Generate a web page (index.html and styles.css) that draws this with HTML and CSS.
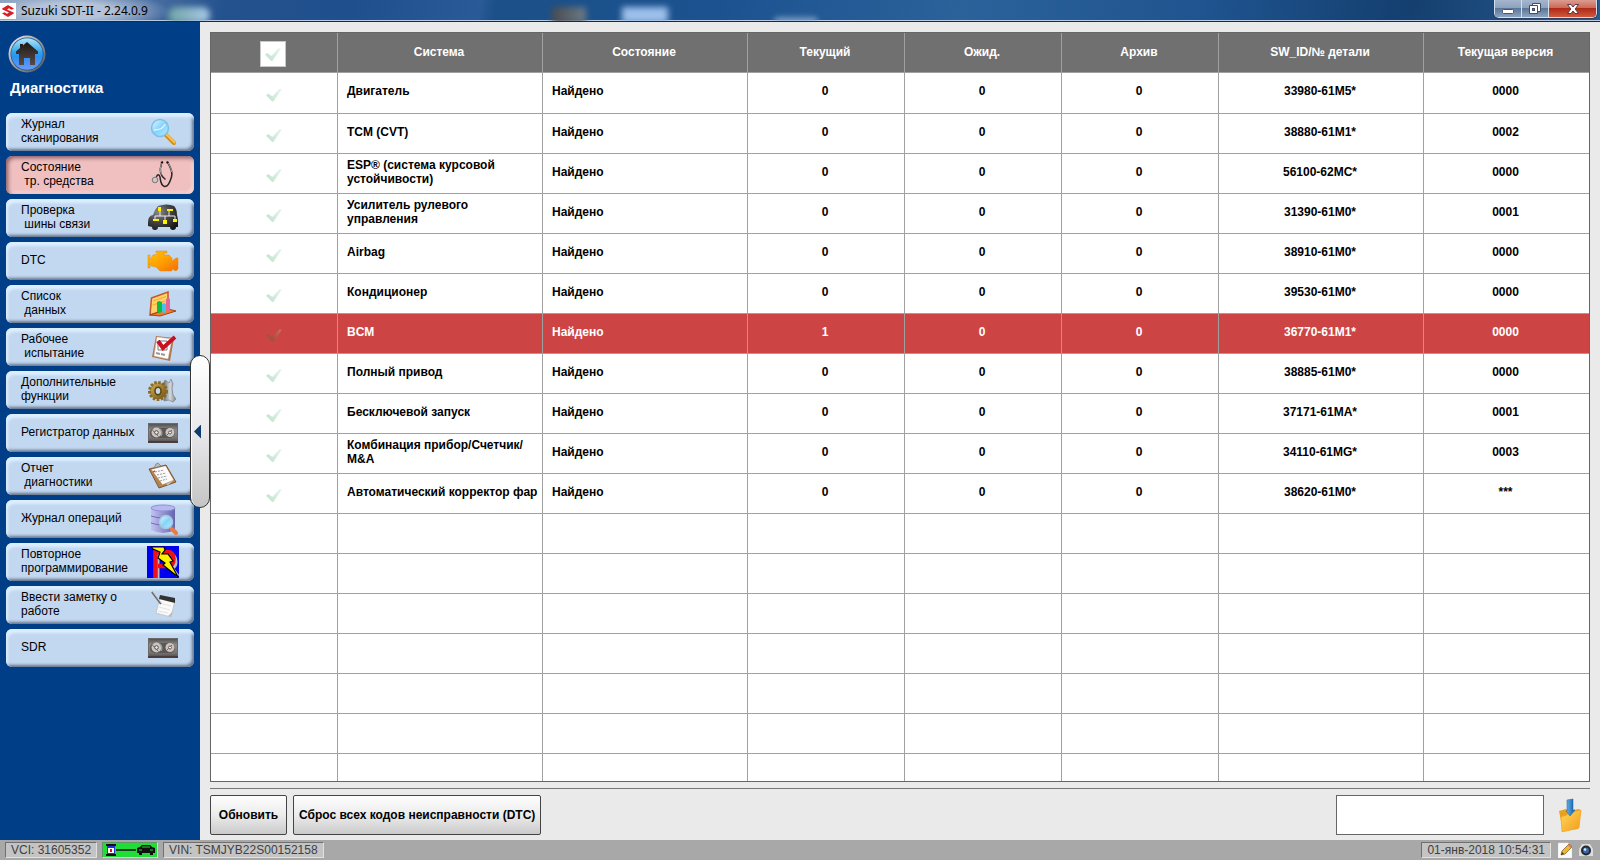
FILE: index.html
```
<!DOCTYPE html>
<html lang="ru">
<head>
<meta charset="utf-8">
<title>Suzuki SDT-II - 2.24.0.9</title>
<link rel="stylesheet" href="styles.css">
</head>
<body>
<svg class="defs" aria-hidden="true">
  <defs>
    <linearGradient id="lens" x1="0" y1="0" x2="1" y2="1"><stop offset="0" stop-color="#e4f9ff"/><stop offset=".5" stop-color="#86d3fa"/><stop offset="1" stop-color="#b8ecff"/></linearGradient>
    <radialGradient id="car" cx=".35" cy=".3" r=".8"><stop offset="0" stop-color="#8a8a8a"/><stop offset=".5" stop-color="#444"/><stop offset="1" stop-color="#161616"/></radialGradient>
    <linearGradient id="engine" x1="0" y1="0" x2="1" y2="1"><stop offset="0" stop-color="#ffc400"/><stop offset=".5" stop-color="#ffa000"/><stop offset="1" stop-color="#f36c0c"/></linearGradient>
    <linearGradient id="tape" x1="0" y1="0" x2="0" y2="1"><stop offset="0" stop-color="#4c4a4a"/><stop offset=".35" stop-color="#8d8a88"/><stop offset=".75" stop-color="#777372"/><stop offset="1" stop-color="#4a4444"/></linearGradient>
    <linearGradient id="drum" x1="0" y1="0" x2="1" y2="0"><stop offset="0" stop-color="#c3c3f0"/><stop offset=".3" stop-color="#a6a6df"/><stop offset="1" stop-color="#6464ae"/></linearGradient>
    <linearGradient id="gold" x1="0" y1="0" x2="1" y2="1"><stop offset="0" stop-color="#d6b45a"/><stop offset="1" stop-color="#6b4c12"/></linearGradient>
    <linearGradient id="steel" x1="0" y1="0" x2="1" y2="0"><stop offset="0" stop-color="#6e7479"/><stop offset=".5" stop-color="#d5dadd"/><stop offset="1" stop-color="#7b8287"/></linearGradient>
    <linearGradient id="folder" x1="0" y1="0" x2="1" y2="1"><stop offset="0" stop-color="#ffd95a"/><stop offset="1" stop-color="#f39a1a"/></linearGradient>
    <linearGradient id="arrow" x1="0" y1="0" x2="1" y2="0"><stop offset="0" stop-color="#6ab7ee"/><stop offset="1" stop-color="#0b5aa6"/></linearGradient>
    <linearGradient id="ball" x1="0" y1="0" x2="0" y2="1"><stop offset="0" stop-color="#b5e6fb"/><stop offset=".45" stop-color="#2ba4ea"/><stop offset=".6" stop-color="#2f8ff0"/><stop offset="1" stop-color="#6a9bff"/></linearGradient>
    <linearGradient id="rim" x1="0" y1="0" x2="1" y2="1"><stop offset="0" stop-color="#f4f4f4"/><stop offset=".5" stop-color="#9a9a9a"/><stop offset="1" stop-color="#4e4e4e"/></linearGradient>
    <linearGradient id="roof" x1="0" y1="0" x2="0" y2="1"><stop offset="0" stop-color="#201816"/><stop offset="1" stop-color="#584a48"/></linearGradient>
    <symbol id="i-tape" viewBox="0 0 32 32">
      <rect x="1" y="6" width="30" height="20" fill="url(#tape)"/><path d="M1.500 25.500V6.500H30.500V25.500" fill="none" stroke="#6b6867"/><path d="M1 25h30" stroke="#4a3c3a" stroke-width="2"/>
      <rect x="3" y="11" width="25" height="10" rx="5" fill="#595655"/>
      <circle cx="9.500" cy="15.500" r="5" fill="#c9c6c2"/><circle cx="23" cy="15.500" r="4.500" fill="#c9c6c2"/>
      <path d="M5.500 13l6 6.500M20 18l5-5" stroke="#6b6664" stroke-width="1" fill="none"/><circle cx="9.500" cy="15.500" r="1.800" fill="#eee" stroke="#5b4b4a"/><circle cx="23" cy="15.500" r="1.500" fill="#eee" stroke="#7b5a54"/>
      <path d="M13 12q3 3 1 7" stroke="#999" stroke-width="1.500" fill="none"/>
    </symbol>
  </defs>
</svg>

<header class="titlebar">
  <svg class="brand" viewBox="0 0 16 16" aria-hidden="true"><rect width="16" height="16" fill="#fff"/><path d="M8 2L2.200 5.400Q1.800 6 2.500 6.400L9 9.500 7 10.700 4.500 9.300 2 10.500 8 14 13.800 10.600Q14.200 10 13.500 9.600L7 6.500 9 5.300 11.500 6.700 14 5.500z" fill="#dc1f26"/></svg>
  <h1 class="caption">Suzuki SDT-II - 2.24.0.9</h1>
  <div class="blurs" aria-hidden="true"><i class="blur green"></i><i class="blur dark"></i><i class="blur light"></i><i class="blur low"></i></div>
  <div class="winbtns">
    <button type="button" aria-label="Свернуть"><svg width="14" height="12" viewBox="0 0 14 12"><rect x="1.500" y="6.500" width="11" height="4" rx="1" fill="#fff" stroke="#4a5570"/></svg></button>
    <button type="button" aria-label="Развернуть"><svg width="14" height="14" viewBox="0 0 14 14"><path d="M4.500 1.500h8v8h-8z" fill="#fff" stroke="#444b66"/><path d="M1.500 3.500h8v8h-8z" fill="#fff" stroke="#444b66"/><rect x="4.500" y="6.500" width="2" height="2" fill="#68789c" stroke="#444b66"/></svg></button>
    <button type="button" class="close" aria-label="Закрыть"><svg width="14" height="12" viewBox="0 0 14 12"><path d="M1.500 1.500h3.500l2 2.500 2-2.500h3.500L9.200 6l3.300 4.500H9L7 8l-2 2.500H1.500L4.800 6z" fill="#fff" stroke="#5a3a44"/></svg></button>
  </div>
</header>

<div class="workspace">
  <nav class="sidebar" aria-label="Диагностика">
    <button type="button" class="home" aria-label="Домой">
      <svg width="38" height="38" viewBox="0 0 38 38"><circle cx="19" cy="19" r="18.500" fill="url(#rim)"/><circle cx="19" cy="19" r="16.500" fill="#1b4f86"/><circle cx="19" cy="19" r="15.800" fill="url(#ball)"/><path d="M19 7L30 16.500v2.500h-3v11h-5v-7h-6v7h-5V19H8v-2.500l4-3.500V9h3v1.500z" fill="url(#roof)"/></svg>
    </button>
    <h2>Диагностика</h2>
    <ul class="menu">
      <li><button type="button"><span>Журнал
сканирования</span><svg viewBox="0 0 32 32"><path d="M19 19l8 8" stroke="#d98a10" stroke-width="4" stroke-linecap="round"/><path d="M19.500 18.500l8 8" stroke="#ffc23c" stroke-width="2" stroke-linecap="round"/><circle cx="13" cy="12" r="8.500" fill="url(#lens)" stroke="#7cc0ea" stroke-width="1.500"/><path d="M7 14c4 0 9-1 11-6" stroke="#d8f4ff" stroke-width="1.500" fill="none"/></svg></button></li>
      <li><button type="button" class="current" aria-current="page"><span>Состояние
 тр. средства</span><svg viewBox="0 0 32 32"><path d="M14 4l2-1M19.500 3l2 1" stroke="#111" stroke-width="2"/><path d="M14.500 4.500c-2 6-2 12 4 16M21 4c3 5 5 9 3.500 14-1.500 5-4 10-7 9.500-4-1-4-6-4.500-9.500-.500-3-3-3-3.500 0" fill="none" stroke="#2a2424" stroke-width="1.500"/><path d="M14.500 4.500c-1.500 4-1.500 8 0 11M21 4c2 3 3.500 6 3.500 9" fill="none" stroke="#a9a0a0"/><circle cx="8" cy="21" r="2.800" fill="#c9c9c9" stroke="#777"/></svg></button></li>
      <li><button type="button"><span>Проверка
 шины связи</span><svg viewBox="0 0 32 32"><path d="M1 20q0-6 5-7 2-6 5-9 9-3 16 0 3 3 3 9 1 3 1 7v5h-2q0 3-3 3t-3-3H11q0 3-3 3t-3-3l-4-1z" fill="url(#car)"/><path d="M8 18v-4h20v4M13 8v6m9-5v5m-4 0v6" fill="none" stroke="#eee" stroke-width="1"/><path d="M11 5h3v4h-3zM20 7h6v2h-6zM6 17h6v2H6zM16 18h4v4h-4zM26 17h4v3h-4z" fill="#fff200"/></svg></button></li>
      <li><button type="button"><span>DTC</span><svg viewBox="0 0 32 32"><path d="M9 6h11v2h-3v2h5l3 3v3l4-3h2v11l-2 2-4-2v2H13l-4-4-5-1-1-3v5H1V10h2v5l3-5 6-1V8H9z" fill="url(#engine)" stroke="#e98a10" stroke-width=".500"/></svg></button></li>
      <li><button type="button"><span>Список
 данных</span><svg viewBox="0 0 32 32"><path d="M4.500 10L21 4v17L3 27z" fill="#ffd267" stroke="#c0592a" stroke-width="1.500"/><path d="M6 13l13-4.500M5.500 17l13-4" stroke="#f7a43c"/><path d="M3 27l18-6 8 2-16 5z" fill="#f47a28" stroke="#a54315"/><path d="M10 14l2-1 3 1v10l-3 1-2-1z" fill="#13b83f"/><path d="M15 16l2-1 2 1v8l-2 1-2-1z" fill="#42c4ea"/><path d="M19 11l2-1 2 1v11l-2 1-2-1z" fill="#e8629c"/></svg></button></li>
      <li><button type="button"><span>Рабочее
 испытание</span><svg viewBox="0 0 32 32"><path d="M9 5l18 2-4 23L5 26z" fill="#b0764a"/><path d="M10 6l15 2-4 20-14-3z" fill="#fff" stroke="#cdbfb3" stroke-width=".500"/><path d="M11 10h9v9h-9z" fill="none" stroke="#777"/><path d="M9 22l4 1M14 23l4 1" stroke="#999" stroke-width="2"/><path d="M11 10l5 7L28 6" fill="none" stroke="#c81020" stroke-width="4"/></svg></button></li>
      <li><button type="button"><span>Дополнительные
функции</span><svg viewBox="0 0 32 32"><path d="M18 6l4 3 2-4 2 5-1 4 1 7 3 4-3 3-4-2-5 1V8z" fill="url(#steel)" stroke="#7a8085" stroke-width=".700"/><circle cx="11" cy="17" r="8.500" fill="url(#gold)"/><circle cx="11" cy="17" r="8.500" fill="none" stroke="#8a6a22" stroke-width="3" stroke-dasharray="2.500 1.500"/><ellipse cx="11" cy="17" rx="3" ry="3.800" fill="#c9d6e6" stroke="#5b4212" stroke-width="1.500"/></svg></button></li>
      <li><button type="button"><span>Регистратор данных</span><svg><use href="#i-tape"/></svg></button></li>
      <li><button type="button"><span>Отчет
 диагностики</span><svg viewBox="0 0 32 32"><path d="M2 9l17-4 10 17-17 6z" fill="#b5834e" stroke="#6b4320" stroke-width=".800"/><path d="M4.500 9.500l14-3.500 8 14-11 4.500z" fill="#fafafa"/><path d="M8 12l9-2M10 15l9-2M11 18l9-2M13 21l7-2" stroke="#999" stroke-dasharray="2 1"/><path d="M6 12l2-1" stroke="#d44" stroke-width="1.500"/><path d="M7 8l2-4 2-1 3 3z" fill="#b8bcc0" stroke="#777" stroke-width=".700"/><path d="M19 24l8-4-6 5z" fill="#ccc"/></svg></button></li>
      <li><button type="button"><span>Журнал операций</span><svg viewBox="0 0 32 32"><path d="M4 5v22q12 6 24 0V5z" fill="url(#drum)"/><path d="M4 13q12 4 24 0M4 20q12 4 24 0" fill="none" stroke="#7070b8"/><ellipse cx="16" cy="5" rx="12" ry="3" fill="#b8b8f0" stroke="#9090da"/><path d="M25 26l4 4" stroke="#ee7a3d" stroke-width="4" stroke-linecap="round"/><circle cx="19" cy="19" r="6.500" fill="url(#lens)" stroke="#a5c8dc" stroke-width="1.500"/></svg></button></li>
      <li><button type="button"><span>Повторное
программирование</span><svg viewBox="0 0 32 32"><rect width="32" height="32" fill="#0000f0"/><path d="M11 32V8h12q6 1 6 8 0 5-4 6l6 8" fill="none" stroke="#b9b9c9" stroke-width="3"/><path d="M8.500 32V6H20q6.500 0 6.500 7t-6.500 7H11" fill="none" stroke="#f0101a" stroke-width="4.500"/><path d="M4 1h13l1 3-3 4h6l5 7-3 1 8 15-15-12 2-2-7-5 2-6-7-3z" fill="#fff200" stroke="#000" stroke-width="1.200"/></svg></button></li>
      <li><button type="button"><span>Ввести заметку о
работе</span><svg viewBox="0 0 32 32"><path d="M13 9l15 2-4 17-15-4z" fill="#fafafa" stroke="#bbb" stroke-width=".700"/><path d="M13 6l15 3v5l-16-4z" fill="#333"/><path d="M12 14l12 3M12 18l11 3M11 22l10 2" stroke="#e3e3e3"/><path d="M24 28l2-6-5 5z" fill="#bbb"/><path d="M5 3l9 12" stroke="#666" stroke-width="2"/><path d="M6 3l9 12" stroke="#ccc"/></svg></button></li>
      <li><button type="button"><span>SDR</span><svg><use href="#i-tape"/></svg></button></li>
    </ul>
    <button type="button" class="handle" aria-label="Скрыть панель"><i></i></button>
  </nav>

  <main class="content">
    <div class="grid">
      <table>
        <colgroup><col class="c-tick"><col class="c-name"><col class="c-name"><col class="c-num"><col class="c-num"><col class="c-num"><col class="c-name"><col class="c-ver"></colgroup>
        <thead>
          <tr><th><label class="all"><input type="checkbox" class="tick" aria-label="Выбрать все"></label></th><th>Система</th><th>Состояние</th><th>Текущий</th><th>Ожид.</th><th>Архив</th><th>SW_ID/№ детали</th><th>Текущая версия</th></tr>
        </thead>
        <tbody>
          <tr><td><input type="checkbox" class="tick" aria-label="Двигатель"></td><td>Двигатель</td><td>Найдено</td><td>0</td><td>0</td><td>0</td><td>33980-61M5*</td><td>0000</td></tr>
          <tr><td><input type="checkbox" class="tick" aria-label="TCM (CVT)"></td><td>TCM (CVT)</td><td>Найдено</td><td>0</td><td>0</td><td>0</td><td>38880-61M1*</td><td>0002</td></tr>
          <tr><td><input type="checkbox" class="tick" aria-label="ESP"></td><td>ESP® (система курсовой устойчивости)</td><td>Найдено</td><td>0</td><td>0</td><td>0</td><td>56100-62MC*</td><td>0000</td></tr>
          <tr><td><input type="checkbox" class="tick" aria-label="Усилитель рулевого управления"></td><td>Усилитель рулевого управления</td><td>Найдено</td><td>0</td><td>0</td><td>0</td><td>31390-61M0*</td><td>0001</td></tr>
          <tr><td><input type="checkbox" class="tick" aria-label="Airbag"></td><td>Airbag</td><td>Найдено</td><td>0</td><td>0</td><td>0</td><td>38910-61M0*</td><td>0000</td></tr>
          <tr><td><input type="checkbox" class="tick" aria-label="Кондиционер"></td><td>Кондиционер</td><td>Найдено</td><td>0</td><td>0</td><td>0</td><td>39530-61M0*</td><td>0000</td></tr>
          <tr class="fault"><td><input type="checkbox" class="tick" aria-label="BCM"></td><td>BCM</td><td>Найдено</td><td>1</td><td>0</td><td>0</td><td>36770-61M1*</td><td>0000</td></tr>
          <tr><td><input type="checkbox" class="tick" aria-label="Полный привод"></td><td>Полный привод</td><td>Найдено</td><td>0</td><td>0</td><td>0</td><td>38885-61M0*</td><td>0000</td></tr>
          <tr><td><input type="checkbox" class="tick" aria-label="Бесключевой запуск"></td><td>Бесключевой запуск</td><td>Найдено</td><td>0</td><td>0</td><td>0</td><td>37171-61MA*</td><td>0001</td></tr>
          <tr><td><input type="checkbox" class="tick" aria-label="Комбинация прибор/Счетчик/M&amp;A"></td><td>Комбинация прибор/Счетчик/<wbr>M&amp;A</td><td>Найдено</td><td>0</td><td>0</td><td>0</td><td>34110-61MG*</td><td>0003</td></tr>
          <tr><td><input type="checkbox" class="tick" aria-label="Автоматический корректор фар"></td><td>Автоматический корректор фар</td><td>Найдено</td><td>0</td><td>0</td><td>0</td><td>38620-61M0*</td><td>***</td></tr>
          <tr><td></td><td></td><td></td><td></td><td></td><td></td><td></td><td></td></tr>
          <tr><td></td><td></td><td></td><td></td><td></td><td></td><td></td><td></td></tr>
          <tr><td></td><td></td><td></td><td></td><td></td><td></td><td></td><td></td></tr>
          <tr><td></td><td></td><td></td><td></td><td></td><td></td><td></td><td></td></tr>
          <tr><td></td><td></td><td></td><td></td><td></td><td></td><td></td><td></td></tr>
          <tr><td></td><td></td><td></td><td></td><td></td><td></td><td></td><td></td></tr>
          <tr><td></td><td></td><td></td><td></td><td></td><td></td><td></td><td></td></tr>
        </tbody>
      </table>
    </div>
    <div class="actions">
      <button type="button" class="push">Обновить</button>
      <button type="button" class="push">Сброс всех кодов неисправности (DTC)</button>
      <input type="text" class="note" aria-label="Заметка">
      <button type="button" class="save" aria-label="Сохранить">
        <svg width="24" height="34" viewBox="0 0 24 34"><path d="M1 13l7-2 2 2 11-2 2 2-3 18-15 2z" fill="#e9a01e"/><path d="M3 19l6-2 1-2 13-3-2 18-17 4z" fill="url(#folder)" stroke="#f0a82a" stroke-width=".700"/><path d="M9 2l6-1v11h2l-5 6-4-5h1z" fill="url(#arrow)" stroke="#1c5c9c" stroke-width=".500"/></svg>
      </button>
    </div>
  </main>
</div>

<footer class="status">
  <span class="cell">VCI: 31605352</span>
  <span class="link"><svg width="52" height="14" viewBox="0 0 52 14"><path d="M2 1h10v2H2zM2 11h10v2H2z" fill="#111"/><rect x="3" y="3" width="8" height="8" fill="#2335d8"/><rect x="4" y="5" width="6" height="5" fill="#fff"/><rect x="6" y="6" width="2" height="3" fill="#e11"/><path d="M12 7h20" stroke="#111" stroke-width="1.500"/><path d="M33 5l3-1 2-2h8l2 2 3 1v5h-2v2h-3v-2h-8v2h-3v-2h-2z" fill="#111"/><path d="M38 4h8M35 7h3m8 0h3" stroke="#22dc38"/></svg></span>
  <span class="cell">VIN: TSMJYB22S00152158</span>
  <span class="cell clock">01-янв-2018 10:54:31</span>
  <svg class="tray" width="14" height="16" viewBox="0 0 14 16"><path d="M0 1h10l4 4v11H0z" fill="#fbfbfb" stroke="#ddd" stroke-width=".500"/><path d="M3 13l1-4 7-7 3 3-7 7z" fill="#f2b52d" stroke="#7a5a22" stroke-width=".700"/><path d="M10 3l3 3 1-2-2-2z" fill="#c77"/><path d="M3 13l1-3 2 2z" fill="#4a3a22"/></svg>
  <svg class="tray" width="14" height="14" viewBox="0 0 14 14"><path d="M3 1h8l3 5v7H0V6z" fill="#dcdcdc"/><circle cx="7" cy="7.500" r="5" fill="#23282f"/><circle cx="7" cy="7.500" r="3" fill="#3a68a8"/><circle cx="6" cy="6.500" r="1.300" fill="#d8ecff"/></svg>
</footer>
</body>
</html>
```
FILE: styles.css
```
* { box-sizing: border-box; }

body {
  margin: 0;
  height: 100vh;
  display: flex;
  flex-direction: column;
  overflow: hidden;
  background: #eaeaea;
  color: #000;
  font: 12px/14px "Liberation Sans", Arial, sans-serif;
}

button, input { font: inherit; color: inherit; margin: 0; }
button { padding: 0; border: 0; background: none; }
.defs { position: absolute; width: 0; height: 0; }

/* Title bar */
.titlebar {
  position: relative;
  flex: none;
  display: flex;
  align-items: flex-start;
  height: 22px;
  overflow: hidden;
  border-bottom: 1px solid #16294a;
  box-shadow: inset 0 -1px #b9cbe2;
  background:
    radial-gradient(ellipse 100px 20px at 70px 11px, #b4c3d8 40%, transparent 100%),
    linear-gradient(100deg, #8099bb 0, #4d71a3 9%, #24528e 14%, #1f4f8d 22%, #2a5a97 30%, #1b5088 31%, #1c5290 45%, #2c629a 60%, #1f5490 75%, #143f6f 88%, #2a5a8f 100%);
}
.brand { width: 16px; height: 16px; margin-top: 3px; }
.caption { margin: 3px 0 0 5px; font: 12px/16px "Noto Sans", "Open Sans", sans-serif; }
.blur { position: absolute; height: 16px; top: 7px; filter: blur(3px); }
.green { left: 168px; width: 42px; background: linear-gradient(90deg, #6fa3a4, #a9c8e6); border-radius: 8px; }
.dark { left: 552px; width: 34px; background: linear-gradient(90deg, #4a4a4c, #6d7c86); }
.light { left: 622px; width: 46px; background: #9cc0ea; }
.low { left: 775px; width: 42px; top: 18px; height: 6px; background: #8fb0d4; }

.winbtns {
  position: relative;
  display: flex;
  height: 18px;
  margin: 0 3px 0 auto;
  border: 1px solid #d4dfee;
  border-top: 0;
  border-radius: 0 0 5px 5px;
  overflow: hidden;
  box-shadow: 0 0 0 1px #2b3f60;
}
.winbtns button {
  display: flex;
  align-items: center;
  justify-content: center;
  width: 27px;
  border-right: 1px solid #d4dfee;
  background: linear-gradient(#a5b6cd 0, #8ea2bd 45%, #5c7699 50%, #8ba4c0 100%);
}
.winbtns .close {
  width: 47px;
  border: 0;
  background: linear-gradient(#dc9c90 0, #cc6a58 45%, #b02a18 50%, #d0583c 100%);
}

/* Sidebar */
.workspace { flex: 1; min-height: 0; display: flex; }
.sidebar {
  position: relative;
  flex: none;
  width: 200px;
  padding: 13px 6px 0;
  background: #003e87;
}
.home { display: block; margin-left: 2px; height: 38px; }
.home svg { display: block; }
.sidebar h2 {
  margin: 7px 4px 17px;
  color: #fff;
  font-size: 15px;
  line-height: 16px;
}
.menu {
  display: flex;
  flex-direction: column;
  gap: 5px;
  margin: 0;
  padding: 0;
  list-style: none;
}
.menu button {
  display: flex;
  align-items: center;
  justify-content: space-between;
  width: 100%;
  height: 38px;
  padding: 0 15px;
  border-radius: 6px;
  background: #c2d7f0;
  box-shadow: inset 2px 4px 3px #dcefff, inset -2px -2px 3px #65758c;
  text-align: left;
}
.menu .current {
  background: #f0c0c0;
  box-shadow: inset 2px 2px 4px #875a62, inset -2px -2px 3px #f8dcdc;
}
.menu span { padding-bottom: 2px; white-space: pre; }
.menu svg { flex: none; width: 32px; height: 32px; }

.handle {
  position: absolute;
  top: 333px;
  right: -10px;
  display: flex;
  align-items: center;
  width: 20px;
  height: 153px;
  padding-left: 3px;
  border: 1px solid #333;
  border-radius: 10px;
  background: linear-gradient(#fff, #e9e9eb 50%, #c4c4c4);
  box-shadow: inset 1px 1px 1px #fff;
}
.handle i {
  width: 7px;
  height: 14px;
  background: #0f3c70;
  clip-path: polygon(100% 0, 100% 100%, 0 50%);
}

/* Table */
.content {
  flex: 1;
  min-width: 0;
  display: flex;
  flex-direction: column;
  padding: 10px 10px 0;
}
.grid {
  flex: 1;
  min-height: 0;
  overflow: hidden;
  border: 1px solid #666;
  background: #fff;
}
table {
  width: 100%;
  table-layout: fixed;
  border-collapse: separate;
  border-spacing: 0;
  font-weight: bold;
}
.c-tick { width: 127px; }
.c-name { width: 205px; }
.c-num { width: 157px; }
.c-ver { width: 165px; }
th, td {
  height: 40px;
  padding: 0 4px 4px 2px;
  border: solid #a0a0a0;
  border-width: 0 1px 1px 0;
  vertical-align: middle;
  text-align: center;
}
th:last-child, td:last-child { border-right: 0; }
th { padding-bottom: 2px; background: #707070; color: #fff; }
tbody tr:first-child td { height: 41px; }
td:nth-child(2), td:nth-child(3) { padding-left: 9px; text-align: left; }
th:first-child { padding-top: 2px; padding-bottom: 0; }
td:first-child { padding: 4px 0 0; }
.fault td { background: #cc4444; color: #fff; }

.tick {
  appearance: none;
  display: block;
  width: 16px;
  height: 13px;
  margin: 0 auto;
  background: linear-gradient(60deg, #c8e8d4 30%, #e6f4ec 90%);
  clip-path: polygon(0 52%, 14% 38%, 40% 62%, 84% 2%, 100% 4%, 46% 100%, 38% 100%);
}
.fault .tick { background: linear-gradient(60deg, #a85040 40%, #c86a62 90%); }
.all {
  display: flex;
  align-items: center;
  width: 26px;
  height: 26px;
  margin: 0 auto;
  padding-top: 2px;
  border: 1px solid #c8c8c8;
  background: #fff;
}

/* Actions */
.actions {
  flex: none;
  display: flex;
  gap: 6px;
  margin-top: 6px;
  padding: 6px 0 5px;
  border-top: 1px solid #777;
}
.push {
  min-width: 77px;
  height: 40px;
  padding: 0 5px;
  border: 1px solid #444;
  border-radius: 2px;
  background: linear-gradient(#fdfdfd, #ececec 50%, #cacaca);
  font-weight: bold;
}
.note {
  width: 208px;
  height: 40px;
  margin-left: auto;
  border: 1px solid #666;
  background: #fff;
}
.save { width: 40px; height: 40px; display: flex; align-items: center; justify-content: center; }

/* Status bar */
.status {
  flex: none;
  display: flex;
  align-items: center;
  gap: 5px;
  height: 20px;
  padding: 0 7px 0 5px;
  background: #a8a8a8;
  color: #404040;
}
.cell {
  height: 16px;
  padding: 0 5px;
  border: 1px solid;
  border-color: #707070 #e0e0e0 #e0e0e0 #707070;
  background: #c4c4c4;
}
.link {
  display: flex;
  align-items: center;
  justify-content: center;
  width: 56px;
  height: 16px;
  border: 1px solid;
  border-color: #5a9a60 #c8f0c8 #c8f0c8 #5a9a60;
  background: #22dc38;
}
.clock { margin-left: auto; }
.tray { margin-left: 2px; }
```
